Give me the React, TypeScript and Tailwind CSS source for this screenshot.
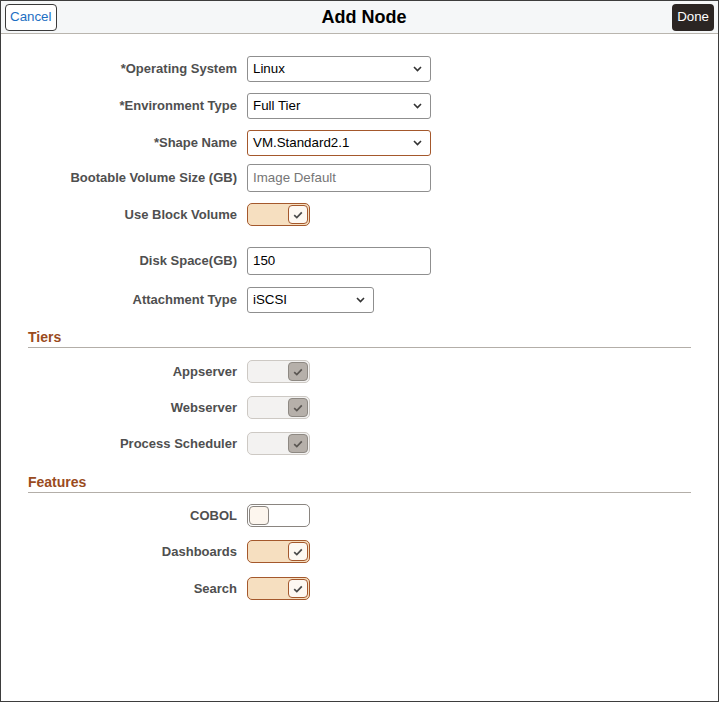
import React from "react";

const font = { fontFamily: '"Liberation Sans", Arial, sans-serif' };

function Chevron() {
  return (
    <svg width="9" height="6" viewBox="0 0 9 6" className="shrink-0">
      <path d="M1 1l3.5 3.5L8 1" fill="none" stroke="#333" strokeWidth="1.6" />
    </svg>
  );
}

function Check({ color = "#4a4a4a" }: { color?: string }) {
  return (
    <svg width="10" height="8" viewBox="0 0 10 8">
      <path d="M1.2 4.2l2.6 2.4L8.8 1.4" fill="none" stroke={color} strokeWidth="1.7" />
    </svg>
  );
}

function Select({ value, width, accent }: { value: string; width: string; accent?: boolean }) {
  return (
    <div
      className={`${width} h-[26px] flex items-center justify-between pl-[5px] pr-[8px] rounded-[3px] bg-white border text-[13.33px] text-black ${
        accent ? "border-[#a4582c]" : "border-[#8f8f8f]"
      }`}
    >
      <span>{value}</span>
      <Chevron />
    </div>
  );
}

function Toggle({ state }: { state: "on" | "off" | "disabled" }) {
  if (state === "disabled") {
    return (
      <div className="w-[63px] h-[23px] rounded-[5px] border border-[#cdc9c4] bg-[#f3f2f1] flex items-center justify-end px-[1px]">
        <div className="w-[20px] h-[19px] rounded-[4px] border border-[#8e8983] bg-[#b6b0aa] flex items-center justify-center">
          <Check color="#5a5652" />
        </div>
      </div>
    );
  }
  if (state === "off") {
    return (
      <div className="w-[63px] h-[23px] rounded-[5px] border border-[#8a8580] bg-white flex items-center justify-start px-[1px]">
        <div className="w-[20px] h-[19px] rounded-[4px] border border-[#8a8580] bg-[#fdf6ee]" />
      </div>
    );
  }
  return (
    <div className="w-[63px] h-[23px] rounded-[5px] border border-[#a4582c] bg-[#f6dfc0] flex items-center justify-end px-[1px]">
      <div className="w-[20px] h-[19px] rounded-[4px] border border-[#a4582c] bg-[#fdf8f2] flex items-center justify-center">
        <Check />
      </div>
    </div>
  );
}

function Row({ label, mt, children }: { label: string; mt: string; children: React.ReactNode }) {
  return (
    <div className={`flex items-center ${mt}`}>
      <div className="w-[236px] text-right text-[13px] font-bold text-[#4f4f4f]">{label}</div>
      <div className="ml-[10px]">{children}</div>
    </div>
  );
}

function Section({ title, mt }: { title: string; mt: string }) {
  return (
    <div className={`mx-[27px] ${mt} h-[21px] border-b border-[#b3aea8] text-[14px] leading-[20px] font-bold text-[#9a4b1d]`}>
      {title}
    </div>
  );
}

export default function App() {
  return (
    <div style={font} className="w-[719px] h-[702px] border border-[#3d3d3d] bg-white overflow-hidden">
      {/* Header */}
      <div className="h-[33px] bg-[#f5f7f8] border-b border-[#b9b5ae] flex items-center justify-between px-[4px] relative">
        <button className="h-[27px] px-[4px] rounded-[4px] border border-[#3a3a3a] bg-white text-[13.33px] text-[#1d6fc3]">
          Cancel
        </button>
        <div className="absolute left-[9px] right-0 text-center text-[18px] font-bold text-black pointer-events-none">
          Add Node
        </div>
        <button className="h-[27px] px-[5px] rounded-[4px] bg-[#2b2523] text-[13.33px] text-white">
          Done
        </button>
      </div>

      <Row label="*Operating System" mt="mt-[22px]">
        <Select value="Linux" width="w-[184px]" />
      </Row>
      <Row label="*Environment Type" mt="mt-[11px]">
        <Select value="Full Tier" width="w-[184px]" />
      </Row>
      <Row label="*Shape Name" mt="mt-[11px]">
        <Select value="VM.Standard2.1" width="w-[184px]" accent />
      </Row>
      <Row label="Bootable Volume Size (GB)" mt="mt-[8px]">
        <div className="w-[184px] h-[28px] flex items-center pl-[5px] rounded-[3px] border border-[#8f8f8f] bg-white text-[13.33px] text-[#767676]">
          Image Default
        </div>
      </Row>
      <Row label="Use Block Volume" mt="mt-[11px]">
        <Toggle state="on" />
      </Row>
      <Row label="Disk Space(GB)" mt="mt-[21px]">
        <div className="w-[184px] h-[28px] flex items-center pl-[5px] rounded-[3px] border border-[#8f8f8f] bg-white text-[13.33px] text-black">
          150
        </div>
      </Row>
      <Row label="Attachment Type" mt="mt-[12px]">
        <Select value="iSCSI" width="w-[127px]" />
      </Row>

      <Section title="Tiers" mt="mt-[14px]" />
      <Row label="Appserver" mt="mt-[12px]">
        <Toggle state="disabled" />
      </Row>
      <Row label="Webserver" mt="mt-[13px]">
        <Toggle state="disabled" />
      </Row>
      <Row label="Process Scheduler" mt="mt-[13px]">
        <Toggle state="disabled" />
      </Row>

      <Section title="Features" mt="mt-[17px]" />
      <Row label="COBOL" mt="mt-[11px]">
        <Toggle state="off" />
      </Row>
      <Row label="Dashboards" mt="mt-[13px]">
        <Toggle state="on" />
      </Row>
      <Row label="Search" mt="mt-[14px]">
        <Toggle state="on" />
      </Row>
    </div>
  );
}
